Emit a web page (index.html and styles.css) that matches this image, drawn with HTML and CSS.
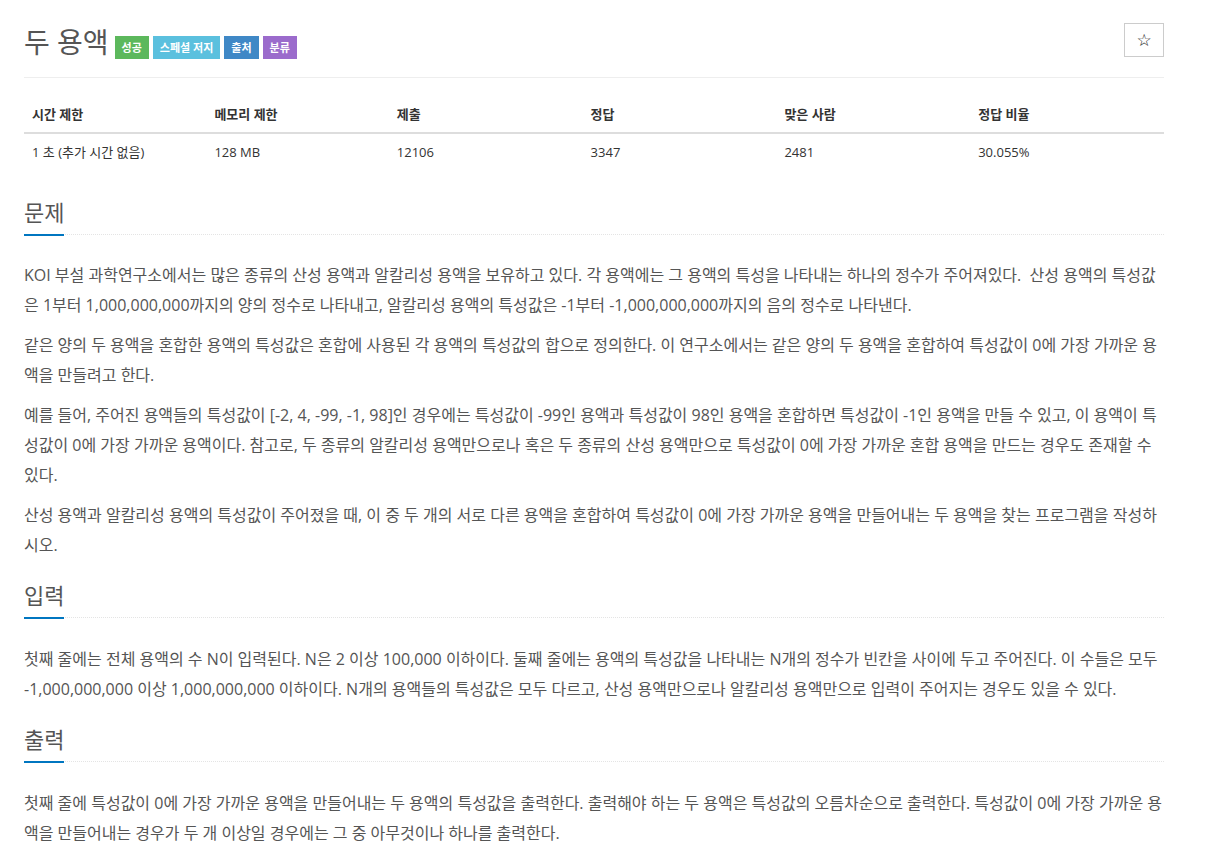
FILE: index.html
```html
<!DOCTYPE html>
<html lang="ko">
<head>
    <meta charset="UTF-8">
    <meta name="viewport" content="width=device-width, initial-scale=1.0">
    <title>두 용액</title>
    <link rel="stylesheet" href="styles.css">
</head>
<body>
    <div class="container">
        <div class="page-header">
            <h1 class="problem-title">
                <span id="problem_title">두 용액</span>
                <span class="problem-label label-success">성공</span>
                <span class="problem-label label-info">스페셜 저지</span>
                <span class="problem-label label-primary">출처</span>
                <span class="problem-label label-purple">분류</span>
            </h1>
            <button class="btn-star" type="button">&#9734;</button>
        </div>

        <table class="problem-info">
            <thead>
                <tr>
                    <th class="col-16">시간 제한</th>
                    <th class="col-16">메모리 제한</th>
                    <th class="col-17">제출</th>
                    <th class="col-17">정답</th>
                    <th class="col-17">맞은 사람</th>
                    <th class="col-17">정답 비율</th>
                </tr>
            </thead>
            <tbody>
                <tr>
                    <td>1 초 (추가 시간 없음)</td>
                    <td>128 MB</td>
                    <td>12106</td>
                    <td>3347</td>
                    <td>2481</td>
                    <td>30.055%</td>
                </tr>
            </tbody>
        </table>

        <!-- 문제 -->
        <section class="problem-section first">
            <div class="headline"><h2>문제</h2></div>
            <div class="problem-text">
                <p>KOI 부설 과학연구소에서는 많은 종류의 산성 용액과 알칼리성 용액을 보유하고 있다. 각 용액에는 그 용액의 특성을 나타내는 하나의 정수가 주어져있다.&nbsp; 산성 용액의 특성값은 1부터 1,000,000,000까지의 양의 정수로 나타내고, 알칼리성 용액의 특성값은 -1부터 -1,000,000,000까지의 음의 정수로 나타낸다.</p>
                <p>같은 양의 두 용액을 혼합한 용액의 특성값은 혼합에 사용된 각 용액의 특성값의 합으로 정의한다. 이 연구소에서는 같은 양의 두 용액을 혼합하여 특성값이 0에 가장 가까운 용액을 만들려고 한다.</p>
                <p>예를 들어, 주어진 용액들의 특성값이 [-2, 4, -99, -1, 98]인 경우에는 특성값이 -99인 용액과 특성값이 98인 용액을 혼합하면 특성값이 -1인 용액을 만들 수 있고, 이 용액이 특성값이 0에 가장 가까운 용액이다. 참고로, 두 종류의 알칼리성 용액만으로나 혹은 두 종류의 산성 용액만으로 특성값이 0에 가장 가까운 혼합 용액을 만드는 경우도 존재할 수 있다.</p>
                <p>산성 용액과 알칼리성 용액의 특성값이 주어졌을 때, 이 중 두 개의 서로 다른 용액을 혼합하여 특성값이 0에 가장 가까운 용액을 만들어내는 두 용액을 찾는 프로그램을 작성하시오.</p>
            </div>
        </section>

        <!-- 입력 -->
        <section class="problem-section">
            <div class="headline"><h2>입력</h2></div>
            <div class="problem-text">
                <p>첫째 줄에는 전체 용액의 수 N이 입력된다. N은 2 이상 100,000 이하이다. 둘째 줄에는 용액의 특성값을 나타내는 N개의 정수가 빈칸을 사이에 두고 주어진다. 이 수들은 모두 -1,000,000,000 이상 1,000,000,000 이하이다. N개의 용액들의 특성값은 모두 다르고, 산성 용액만으로나 알칼리성 용액만으로 입력이 주어지는 경우도 있을 수 있다.</p>
            </div>
        </section>

        <!-- 출력 -->
        <section class="problem-section">
            <div class="headline"><h2>출력</h2></div>
            <div class="problem-text">
                <p>첫째 줄에 특성값이 0에 가장 가까운 용액을 만들어내는 두 용액의 특성값을 출력한다. 출력해야 하는 두 용액은 특성값의 오름차순으로 출력한다. 특성값이 0에 가장 가까운 용액을 만들어내는 경우가 두 개 이상일 경우에는 그 중 아무것이나 하나를 출력한다.</p>
            </div>
        </section>
    </div>
</body>
</html>
```

FILE: styles.css
```css
body {
    margin: 0;
    background: #fff;
    color: #333;
    font-family: 'Open Sans', 'Noto Sans CJK KR', sans-serif;
    font-size: 14px;
    line-height: 1.42857;
}
.container {
    width: 1140px;
    margin-left: 24px;
}
.page-header {
    display: flex;
    justify-content: space-between;
    align-items: flex-start;
    margin-top: 23px;
    height: 54px;
    border-bottom: 1px solid #eee;
}
.problem-title {
    margin: 0;
    display: flex;
    align-items: center;
    gap: 4px;
    font-size: 28px;
    font-weight: normal;
    line-height: 38px;
    color: #555;
}
#problem_title {
    margin-right: 2px;
}
.problem-label {
    display: inline-block;
    margin-top: 10px;
    height: 23px;
    padding: 0 7px;
    color: #fff;
    font-size: 11px;
    font-weight: bold;
    line-height: 23px;
}
.label-success { background: #5cb85c; }
.label-info { background: #5bc0de; }
.label-primary { background: #3f88c6; }
.label-purple { background: #9b6bcc; }
.btn-star {
    width: 40px;
    height: 34px;
    padding: 0;
    background: #fff;
    border: 1px solid #ccc;
    color: #222;
    font-family: 'DejaVu Sans', sans-serif;
    font-size: 17px;
    line-height: 1;
}
.problem-info {
    width: 100%;
    margin-top: 18px;
    border-collapse: collapse;
    font-size: 13px;
}
.problem-info th,
.problem-info td {
    padding: 8px;
    line-height: 20px;
    text-align: left;
}
.problem-info th {
    font-weight: bold;
    border-bottom: 2px solid #ddd;
}
.problem-info td {
    border-top: 1px solid #ddd;
}
.col-16 { width: 16%; }
.col-17 { width: 17%; }
.headline {
    margin: 19px 0 26px;
    border-bottom: 1px dotted #e4e4e4;
}
.first .headline {
    margin: 26px 0 25px;
}
.headline h2 {
    display: inline-block;
    margin: 0 0 -2px;
    padding-bottom: 5px;
    border-bottom: 2px solid #0076c0;
    font-size: 22px;
    font-weight: normal;
    line-height: 33px;
    color: #555;
}
.problem-text {
    color: #555;
    font-size: 16px;
    word-break: break-all;
}
.problem-text p {
    margin: 0 0 10px;
    line-height: 30px;
}
```
